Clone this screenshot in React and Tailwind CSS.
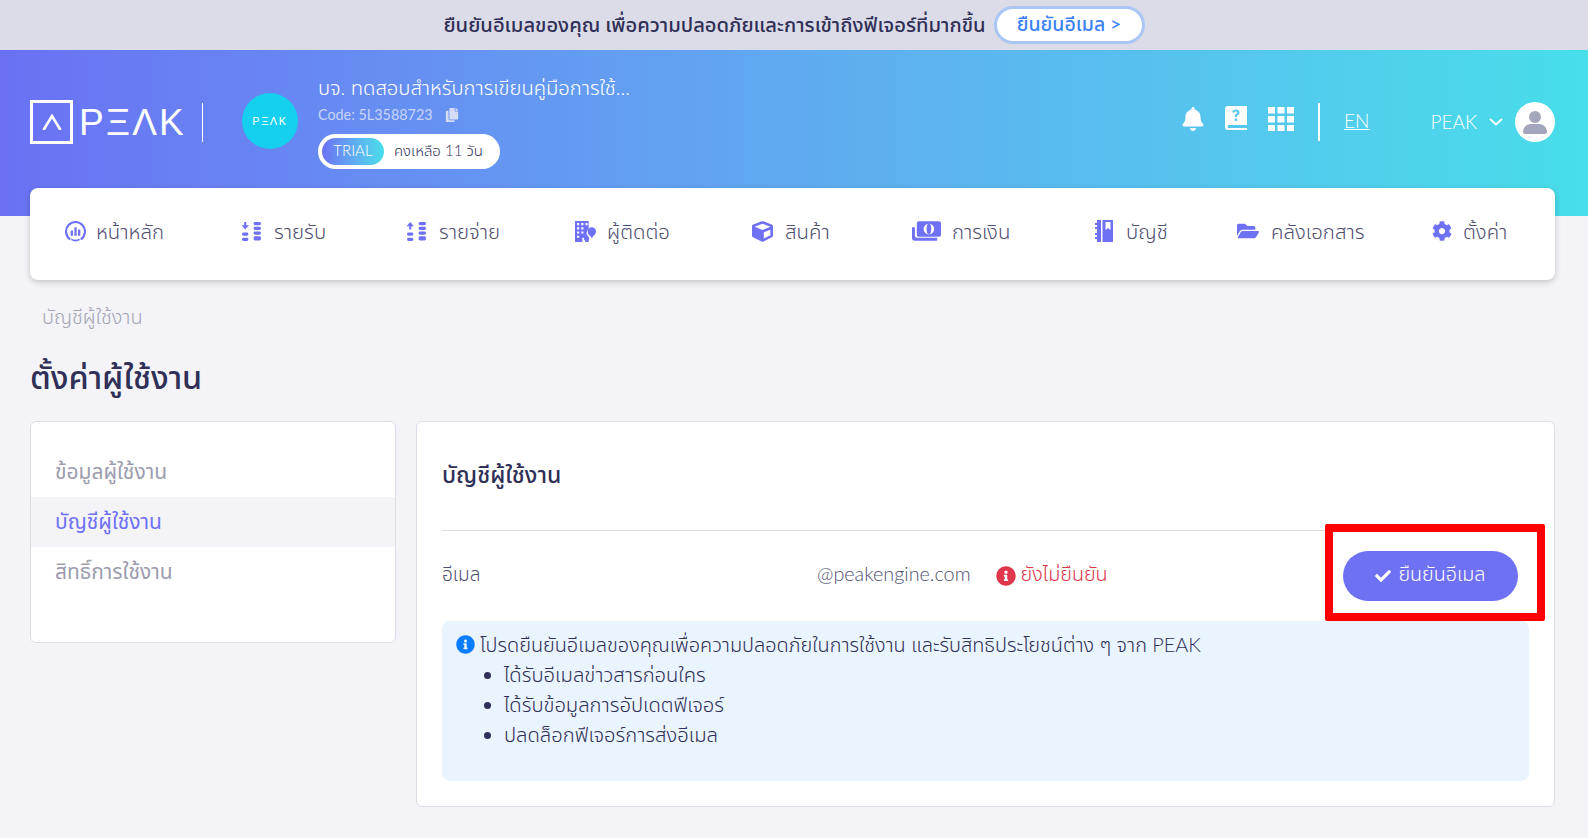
import React from 'react';
import { FaBell, FaCheck, FaCog, FaCopy, FaCube, FaFolderOpen, FaInfoCircle } from 'react-icons/fa';

const THAI = "font-['Lato','Noto_Sans_Thai','Noto_Sans_Thai_Looped','Open_Sans',sans-serif]";

function Gauge() {
  return (
    <svg viewBox="0 0 20 20" className="w-[21px] h-[21px]" fill="none" stroke="currentColor" strokeWidth="2">
      <path d="M5 17.500a9 9 0 1 1 10 0" />
      <path d="M6 17.500c2.500 1.400 5.500 1.400 8 0" strokeWidth="1.600" />
      <path d="M6.500 9v5M10 6v8M13.500 8v6" strokeWidth="2.200" />
    </svg>
  );
}

function Stacks({ up }) {
  return (
    <svg viewBox="0 0 20 20" className="w-[21px] h-[21px]" fill="currentColor">
      {up ? <path d="M4 1l3.500 4H5v3H3V5H.5z" /> : <path d="M3 1h2v3h2.500L4 8 .5 4H3z" />}
      <rect x="1" y="11" width="6" height="3" rx="1.400" />
      <rect x="1" y="16" width="6" height="3" rx="1.400" />
      <rect x="12" y="1" width="7" height="3" rx="1.400" />
      <rect x="12" y="5.500" width="7" height="3" rx="1.400" />
      <rect x="12" y="10" width="7" height="3" rx="1.400" />
      <rect x="12" y="14.500" width="7" height="4" rx="1.400" />
    </svg>
  );
}

function Contacts() {
  return (
    <svg viewBox="0 0 20 20" className="w-[21px] h-[21px]" fill="currentColor">
      <path fillRule="evenodd" d="M0 0h13v7.500a5 5 0 0 0-1 6.500l1 1.500V20h-3v-4H7v4H0zM2 2v2h2V2zm4 0v2h2V2zm4 0v2h2V2zM2 6v2h2V6zm4 0v2h2V6zM2 10v2h2v-2zm4 0v2h2v-2zM2 14v2h2v-2z" />
      <path d="M16 6a4 4 0 0 1 4 4c0 2.400-2 4-3.200 5v1h-1.600v-1C14 14 12 12.400 12 10a4 4 0 0 1 4-4z" />
      <path d="M11 14.500a2.500 2.500 0 0 1 2.500 2.500c0 1-.8 1.700-1.700 2.200V20h-1.600v-.8C9.300 18.700 8.500 18 8.500 17a2.500 2.500 0 0 1 2.500-2.500z" />
    </svg>
  );
}

function Money() {
  return (
    <svg viewBox="0 0 30 20" className="w-[29px] h-[20px]" fill="currentColor">
      <path fillRule="evenodd" d="M7 0h21a2 2 0 0 1 2 2v12a2 2 0 0 1-2 2H7a2 2 0 0 1-2-2V2a2 2 0 0 1 2-2zm10.500 2.500a5.500 5.500 0 1 0 0 11 5.500 5.500 0 0 0 0-11z" />
      <ellipse cx="17.500" cy="8" rx="2.400" ry="5.500" />
      <path d="M0 6h3v9a2 2 0 0 0 2 2h21v3H3a3 3 0 0 1-3-3z" />
    </svg>
  );
}

function Ledger() {
  return (
    <svg viewBox="0 0 18 22" className="w-[18px] h-[22px]" fill="currentColor">
      <path d="M2 0h4v22H2v-3H0v-2h2v-2H0v-2h2V9H0V7h2V5H0V3h2z" />
      <path fillRule="evenodd" d="M7.500 0H18v22H7.500zM10.500 2v8l2.500-2 2.500 2V2z" />
    </svg>
  );
}

function HelpBook() {
  return (
    <svg viewBox="0 0 22 26" className="w-[22px] h-[26px]" fill="currentColor">
      <path fillRule="evenodd" d="M3 0h19v19H4a1.500 1.500 0 0 0 0 3h18v2H3a3 3 0 0 1-3-3V3a3 3 0 0 1 3-3zm8 3.500c-2 0-3.500 1-3.800 2.800l2 .4c.2-.9.8-1.300 1.700-1.300.8 0 1.400.4 1.400 1.100 0 .6-.4 1-1.100 1.500-1 .7-1.400 1.300-1.400 2.500v.5h2v-.4c0-.6.3-.9 1-1.400 1-.7 1.700-1.400 1.700-2.800 0-1.800-1.500-2.900-3.500-2.900zM9.700 12.500V15h2.400v-2.500z" />
    </svg>
  );
}

function Dots() {
  return (
    <svg viewBox="0 0 26 24" className="w-[26px] h-[24px]" fill="currentColor">
      <rect x="0" y="0" width="7" height="6.500" /><rect x="9.500" y="0" width="7" height="6.500" /><rect x="19" y="0" width="7" height="6.500" />
      <rect x="0" y="9" width="7" height="6.500" /><rect x="9.500" y="9" width="7" height="6.500" /><rect x="19" y="9" width="7" height="6.500" />
      <rect x="0" y="18" width="7" height="6" /><rect x="9.500" y="18" width="7" height="6" /><rect x="19" y="18" width="7" height="6" />
    </svg>
  );
}

const NAV = [
  { label: 'หน้าหลัก', icon: <Gauge />, width: 'w-[176px]', gap: 'gap-[10px]' },
  { label: 'รายรับ', icon: <Stacks />, width: 'w-[165px]', gap: 'gap-[12px]' },
  { label: 'รายจ่าย', icon: <Stacks up />, width: 'w-[169px]', gap: 'gap-[12px]' },
  { label: 'ผู้ติดต่อ', icon: <Contacts />, width: 'w-[177px]', gap: 'gap-[11px]' },
  { label: 'สินค้า', icon: <FaCube className="text-[21px]" />, width: 'w-[160px]', gap: 'gap-[12px]' },
  { label: 'การเงิน', icon: <Money />, width: 'w-[183px]', gap: 'gap-[11px]' },
  { label: 'บัญชี', icon: <Ledger />, width: 'w-[142px]', gap: 'gap-[13px]' },
  { label: 'คลังเอกสาร', icon: <FaFolderOpen className="text-[22px]" />, width: 'w-[195px]', gap: 'gap-[12px]' },
  { label: 'ตั้งค่า', icon: <FaCog className="text-[20px]" />, width: 'w-auto', gap: 'gap-[11px]' },
];

function Logo() {
  return (
    <div className="flex items-center text-white">
      <div className="w-[43px] h-[44px] border-[3px] border-white flex items-center justify-center">
        <svg viewBox="0 0 20 16" className="w-[20px] h-[16px]" fill="none" stroke="white" strokeWidth="2.600">
          <path d="M1.500 16L10 2l8.500 14" />
        </svg>
      </div>
      <span className="ml-[6px] font-['Liberation_Sans',sans-serif] text-[37px] leading-none tracking-[2.200px]">PΞΛK</span>
    </div>
  );
}

export default function App() {
  return (
    <div className={`${THAI} min-h-[838px] bg-[#f3f3f8] text-[#32325d] overflow-hidden`}>
      <div className="h-[50px] pb-[2px] bg-[#dcdce8] flex items-center justify-center gap-[8px]">
        <span className="text-[20.200px] text-[#2f2f57] font-medium">ยืนยันอีเมลของคุณ เพื่อความปลอดภัยและการเข้าถึงฟีเจอร์ที่มากขึ้น</span>
        <button className="h-[38px] w-[151px] mt-[2px] pb-[3px] rounded-full bg-white border-[3px] border-[#a9c6f4] text-[#3b82f6] text-[19.500px] font-medium">ยืนยันอีเมล &gt;</button>
      </div>

      <div className="h-[166px] pl-[30px] pr-[33px] bg-gradient-to-r from-[#6a71f3] to-[#47deea] text-white">
        <div className="flex items-start">
          <div className="flex items-center mt-[50px]">
            <Logo />
            <div className="w-px h-[39px] bg-white ml-[16px]" />
          </div>
          <div className="w-[56px] h-[56px] mt-[43px] ml-[39px] rounded-full bg-[#14cfee] flex items-center justify-center font-['Liberation_Sans',sans-serif] text-[11px] tracking-[1.500px]">PΞΛK</div>
          <div className="ml-[20px] mt-[21px]">
            <div className="text-[20.200px] leading-[32px] font-light">บจ. ทดสอบสำหรับการเขียนคู่มือการใช้...</div>
            <div className="flex items-center text-[14.400px] leading-[20px] mt-[2px] text-[#c8d4f8]">
              Code: 5L3588723
              <FaCopy className="ml-[12px] text-[14px] text-[#d5dcf8]" />
            </div>
            <div className="mt-[9px] w-[182px] h-[35px] rounded-full bg-white flex items-center pl-[4px] text-[#32325d] text-[15px] font-light">
              <span className="h-[27px] w-[62px] pb-[2px] rounded-full bg-gradient-to-r from-[#6a71f3] to-[#47deea] text-white flex items-center justify-center">TRIAL</span>
              <span className="ml-[10px] pb-[2px]">คงเหลือ 11 วัน</span>
            </div>
          </div>
          <div className="ml-auto mt-[50px] flex items-center h-[44px]">
            <div className="flex items-center mb-[6px]">
              <FaBell className="text-[24px]" />
              <div className="ml-[20px]"><HelpBook /></div>
              <div className="ml-[21px] flex"><Dots /></div>
            </div>
            <div className="w-[2px] h-[38px] bg-white ml-[24px]" />
            <span className="ml-[24px] mb-[1px] text-[19px] underline font-light">EN</span>
            <span className="ml-[61px] text-[19px] font-light">PEAK</span>
            <svg viewBox="0 0 14 8" className="ml-[12px] w-[14px] h-[8px]" fill="none" stroke="currentColor" strokeWidth="1.800">
              <path d="M1 1l6 5.500L13 1" />
            </svg>
            <div className="ml-[12px] w-[40px] h-[40px] rounded-full bg-white flex items-center justify-center text-[#a4a6bb]">
              <svg viewBox="0 0 24 24" className="w-[24px] h-[24px]" fill="currentColor">
                <circle cx="12" cy="7" r="6" />
                <path d="M0 22c0-5 4-8 8-8h8c4 0 8 3 8 8 0 1-1 2-2 2H2c-1 0-2-1-2-2z" />
              </svg>
            </div>
          </div>
        </div>
      </div>

      <div className="pl-[30px] pr-[33px]">
        <div className="-mt-[28px] relative h-[92px] bg-white rounded-lg shadow-[0_2px_6px_rgba(0,0,0,0.2)] flex items-center pl-[35px] pb-[5px]">
          {NAV.map((item) => (
            <div key={item.label} className={`flex items-center shrink-0 text-[20.400px] font-light text-[#4f4f72] ${item.width} ${item.gap}`}>
              <span className="text-[#6f71f5] flex">{item.icon}</span>
              {item.label}
            </div>
          ))}
        </div>

        <div className="mt-[22px] pl-[12px] text-[20px] leading-[28px] font-light text-[#a5a5b5]">บัญชีผู้ใช้งาน</div>
        <h1 className="mt-[24px] text-[32.400px] leading-[45px] font-medium text-[#2f2f57]">ตั้งค่าผู้ใช้งาน</h1>

        <div className="mt-[22px] flex items-start gap-[20px]">
          <div className="w-[366px] h-[222px] shrink-0 bg-white border border-[#dcdce8] rounded-md pt-[25px] text-[21px] text-[#9c9cae]">
            <div className="h-[50px] px-[24px] pb-[2px] flex items-center">ข้อมูลผู้ใช้งาน</div>
            <div className="h-[50px] px-[24px] pb-[2px] flex items-center bg-[#f3f3f8] text-[#6f71f5]">บัญชีผู้ใช้งาน</div>
            <div className="h-[50px] px-[24px] pb-[2px] flex items-center">สิทธิ์การใช้งาน</div>
          </div>

          <div className="flex-1 h-[386px] bg-white border border-[#dcdce8] rounded-md px-[25px]">
            <div className="h-[109px] pt-[35px] text-[23px] leading-[34px] font-medium text-[#2f2f57] border-b border-[#dcdce8]">บัญชีผู้ใช้งาน</div>
            <div className="h-[90px] flex items-center text-[19px] font-light text-[#4f4f72]">
              <span className="w-[375px] pb-[4px]">อีเมล</span>
              <span className="pb-[4px] text-[19.800px]">@peakengine.com</span>
              <FaInfoCircle className="ml-[25px] text-[#e0364c] text-[20px]" />
              <span className="ml-[5px] pb-[4px] text-[#e0364c] text-[19.800px]">ยังไม่ยืนยัน</span>
              <div className="ml-auto relative">
                <button className="mr-[11px] w-[175px] h-[50px] rounded-full bg-[#6f71f5] text-white text-[19.700px] pb-[4px] flex items-center justify-center gap-[7px]">
                  <FaCheck className="text-[16px] mt-[4px]" />
                  ยืนยันอีเมล
                </button>
                <div className="absolute -left-[18px] -top-[27px] w-[220px] h-[97px] border-[8px] border-[#ff0000] rounded-[2px]" />
              </div>
            </div>
            <div className="h-[160px] bg-[#eaf4fe] rounded-lg px-[14px] pt-[9px] text-[20.200px] leading-[30px] font-light text-[#2f2f57]">
              <div className="flex items-center gap-[5px] h-[29px]">
                <FaInfoCircle className="text-[#0a7cff] text-[19px]" />
                <span className="text-[19.900px] -mt-[2px]">โปรดยืนยันอีเมลของคุณเพื่อความปลอดภัยในการใช้งาน และรับสิทธิประโยชน์ต่าง ๆ จาก PEAK</span>
              </div>
              <ul className="list-disc pl-[48px]">
                <li>ได้รับอีเมลข่าวสารก่อนใคร</li>
                <li>ได้รับข้อมูลการอัปเดตฟีเจอร์</li>
                <li>ปลดล็อกฟีเจอร์การส่งอีเมล</li>
              </ul>
            </div>
          </div>
        </div>
      </div>
    </div>
  );
}
